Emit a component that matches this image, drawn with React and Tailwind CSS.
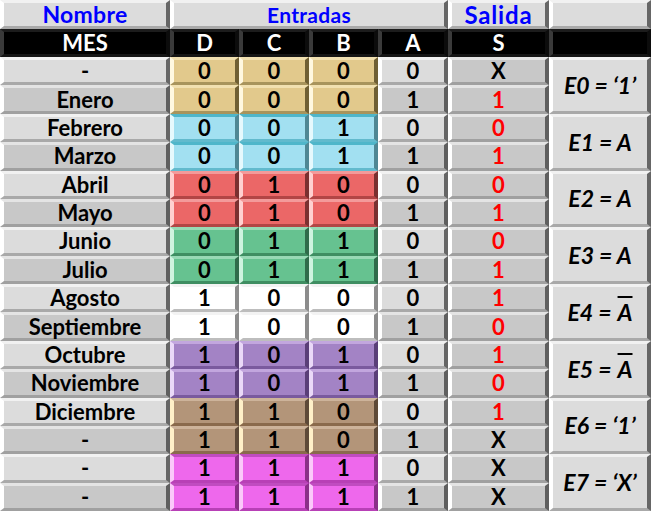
const bevel = "border-t-[3px] border-b-[3px] border-l-[4px] border-r-[4px]";

const styles = {
  light: "bg-[#dcdcdc] border-t-[#f1f1f1] border-l-white border-r-[#666666] border-b-[#a9a9a9]",
  dark: "bg-[#c8c8c8] border-t-[#e4e4e4] border-l-white border-r-[#5f5f5f] border-b-[#a0a0a0]",
  black: "bg-black border-t-[#1c1c1c] border-l-[#3a3a3a] border-r-[#0c0c0c] border-b-[#151515]",
  tan: "bg-[#e2c98c] border-t-[#f1e0b0] border-l-[#fff8e0] border-r-[#6f5f34] border-b-[#a8945c]",
  blue: "bg-[#a2e0f1] border-t-[#4fb6ca] border-l-[#e6f9fd] border-r-[#4f8794] border-b-[#62bacd]",
  red: "bg-[#eb6767] border-t-[#f39a9a] border-l-[#ffd0d0] border-r-[#7a3030] border-b-[#b24545]",
  green: "bg-[#66c290] border-t-[#98d9b5] border-l-[#cff3df] border-r-[#2f6b4a] border-b-[#3f8e62]",
  white: "bg-white border-t-[#f3f3f3] border-l-white border-r-[#8c8c8c] border-b-[#bdbdbd]",
  purple: "bg-[#a383c5] border-t-[#c2a6de] border-l-[#ead9f8] border-r-[#5a3f78] border-b-[#7a5a9e]",
  brown: "bg-[#b39579] border-t-[#cdb39a] border-l-[#fff0c8] border-r-[#5e4a38] border-b-[#8a6a4c]",
  magenta: "bg-[#ee68ec] border-t-[#c04cc0] border-l-[#fbc8fa] border-r-[#8a2f88] border-b-[#b840b6]",
};

const groups = ["tan", "blue", "red", "green", "white", "purple", "brown", "magenta"];

const rows = [
  ["-", 0, 0, 0, 0, "X"],
  ["Enero", 0, 0, 0, 1, "1"],
  ["Febrero", 0, 0, 1, 0, "0"],
  ["Marzo", 0, 0, 1, 1, "1"],
  ["Abril", 0, 1, 0, 0, "0"],
  ["Mayo", 0, 1, 0, 1, "1"],
  ["Junio", 0, 1, 1, 0, "0"],
  ["Julio", 0, 1, 1, 1, "1"],
  ["Agosto", 1, 0, 0, 0, "1"],
  ["Septiembre", 1, 0, 0, 1, "0"],
  ["Octubre", 1, 0, 1, 0, "1"],
  ["Noviembre", 1, 0, 1, 1, "0"],
  ["Diciembre", 1, 1, 0, 0, "1"],
  ["-", 1, 1, 0, 1, "X"],
  ["-", 1, 1, 1, 0, "X"],
  ["-", 1, 1, 1, 1, "X"],
];

const NotA = () => <span className="ml-[6px] overline decoration-2">A</span>;

const equations = [
  <>E0 = ‘1’</>,
  <>E1 = A</>,
  <>E2 = A</>,
  <>E3 = A</>,
  <>E4 ={" "}<NotA /></>,
  <>E5 ={" "}<NotA /></>,
  <>E6 = ‘1’</>,
  <>E7 = ‘X’</>,
];

function Cell({ tone, className = "", children }) {
  return (
    <div className={`${bevel} ${styles[tone]} flex items-center justify-center leading-none ${className}`}>
      {children}
    </div>
  );
}

export default function App() {
  return (
    <div
      className="w-[651px] h-[511px] bg-white grid grid-cols-[170px_69px_70px_69px_70px_101px_102px] grid-rows-[29px_28px_repeat(16,minmax(0,1fr))] text-[22px] font-bold text-black overflow-hidden"
      style={{ fontFamily: "Lato, 'Open Sans', sans-serif" }}
    >
      {/* header row */}
      <Cell tone="light" className="text-[#0000ff] text-[23px] tracking-[0.3px]">Nombre</Cell>
      <Cell tone="light" className="col-span-4 text-[#0000ff] text-[21px] tracking-[0.3px]">Entradas</Cell>
      <Cell tone="light" className="text-[#0000ff] text-[24px] tracking-[0.8px]">Salida</Cell>
      <Cell tone="light" />

      {/* column titles */}
      {["MES", "D", "C", "B", "A", "S", ""].map((t, i) => (
        <Cell key={i} tone="black" className="text-white">{t}</Cell>
      ))}

      {rows.map((r, i) => {
        const group = groups[Math.floor(i / 2)];
        const shade = i % 2 === 0 ? "light" : "dark";
        return [
          <Cell key={`n${i}`} tone={shade}>{r[0]}</Cell>,
          <Cell key={`d${i}`} tone={group}>{r[1]}</Cell>,
          <Cell key={`c${i}`} tone={group}>{r[2]}</Cell>,
          <Cell key={`b${i}`} tone={group}>{r[3]}</Cell>,
          <Cell key={`a${i}`} tone={shade}>{r[4]}</Cell>,
          <Cell key={`s${i}`} tone="dark" className={r[5] === "X" ? "text-black" : "text-[#ff0000]"}>{r[5]}</Cell>,
          i % 2 === 0 ? (
            <Cell key={`e${i}`} tone="light" className="row-span-2 italic text-[23px]">
              {equations[i / 2]}
            </Cell>
          ) : null,
        ];
      })}
    </div>
  );
}
